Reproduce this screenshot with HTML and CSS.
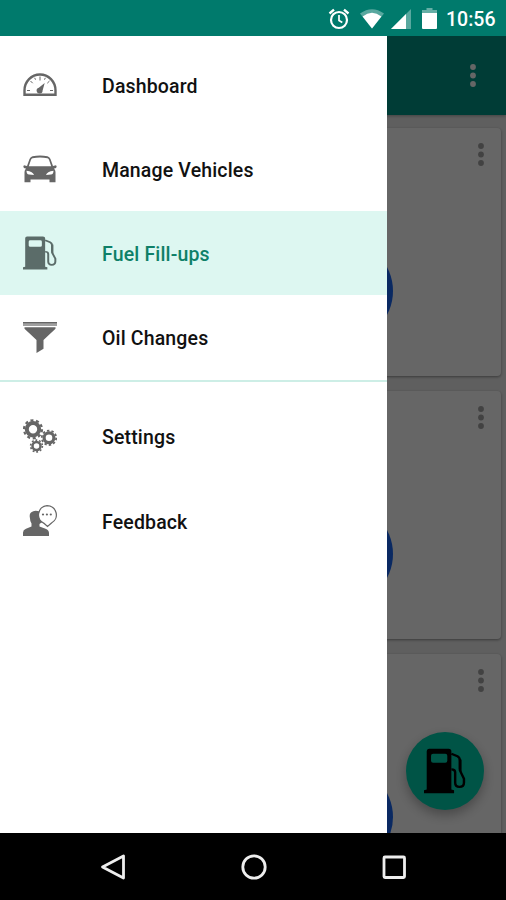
FILE: index.html
```html
<!DOCTYPE html>
<html lang="en">
<head>
    <meta charset="UTF-8">
    <meta name="viewport" content="width=device-width, initial-scale=1.0">
    <title>Fuel Fill-ups</title>
    <link rel="stylesheet" href="styles.css">
</head>
<body>

    <!-- Shared shapes -->
    <svg class="defs" width="0" height="0">
        <symbol id="pump" viewBox="0.8 0 31 36" preserveAspectRatio="none">
            <path fill-rule="evenodd" d="M4.500 .5H19Q21 .5 21 2.500V32.500L23 33V35.500H.8V33L2.800 32.500V2.500Q2.800 .5 4.500 .5ZM7.500 4.500Q6 4.500 6 6V10Q6 11.500 7.500 11.500H16.500Q18 11.500 18 10V6Q18 4.500 16.500 4.500Z"/>
            <path d="M21 4.500L25.500 6.500Q27.300 7.500 27.300 10V17.500L30.300 24V27Q30.300 30.500 27 30.500Q23.800 30.500 23.800 27V19Q23.800 16.700 21 16.700" fill="none" stroke="currentColor" stroke-width="1.800"/>
            <path d="M26.500 9V16L28.500 19V9Z"/>
        </symbol>
        <symbol id="dots" viewBox="0 0 6 23">
            <circle cx="3" cy="3" r="2.900"/>
            <circle cx="3" cy="11.500" r="2.900"/>
            <circle cx="3" cy="20" r="2.900"/>
        </symbol>
    </svg>

    <div class="phone">
        <header class="status-bar">
            <svg class="status-alarm" width="22" height="22" viewBox="0 0 22 22" fill="none" stroke="#fff">
                <circle cx="11" cy="12" r="8" stroke-width="2.200"/>
                <path d="M11 7V12.500L14.300 14.500" stroke-width="1.700"/>
                <path d="M1.500 5.500L6 1.700M20.500 5.500L16 1.700" stroke-width="2.400"/>
            </svg>
            <svg class="status-wifi" width="24" height="20" viewBox="0 0 24 20" fill="#fff">
                <path d="M0 4.500Q12-4 24 4.500L12 19.500Z" opacity=".35"/>
                <path d="M2.600 7.400Q12 0 21.400 7.400L12 19.500Z"/>
            </svg>
            <svg class="status-signal" width="20" height="20" viewBox="0 0 20 20" fill="#fff">
                <path d="M0 20L20 0V20Z" opacity=".35"/>
                <path d="M0 20L15 5V20Z"/>
            </svg>
            <svg class="status-battery" width="15" height="21" viewBox="0 0 15 21" fill="#fff">
                <path d="M4.500 0H10.500V2H15V5H0V2H4.500Z" opacity=".4"/>
                <path d="M0 5H15V20Q15 21 14 21H1Q0 21 0 20Z"/>
            </svg>
            <span class="clock">10:56</span>
        </header>

        <main class="screen">
            <div class="app-bar">
                <svg class="dots"><use href="#dots"/></svg>
            </div>
            <div class="cards">
                <div class="card">
                    <div class="badge"></div>
                    <svg class="dots"><use href="#dots"/></svg>
                </div>
                <div class="card">
                    <div class="badge"></div>
                    <svg class="dots"><use href="#dots"/></svg>
                </div>
                <div class="card">
                    <div class="badge"></div>
                    <svg class="dots"><use href="#dots"/></svg>
                </div>
            </div>
            <div class="fab">
                <svg><use href="#pump"/></svg>
            </div>
            <div class="scrim"></div>

            <nav class="drawer">
                <a class="item">
                    <svg viewBox="0 0 34 34">
                        <path d="M1.500 26.800V22.500A15.500 16 0 0 1 32.500 22.500V26.800Z" fill="none" stroke="currentColor" stroke-width="2.400"/>
                        <path d="M17 8.500V12.500M7.500 13L9.700 15.200M26.500 13L24.300 15.200M4 22.500H7M30 22.500H27M11.700 9.800L12.500 11.700M22.300 9.800L21.500 11.700" stroke="currentColor" stroke-width="1"/>
                        <path d="M21.700 15L19.600 22.500A3 3 0 1 1 15.800 19.700Z"/>
                    </svg>
                    <span>Dashboard</span>
                </a>
                <a class="item">
                    <svg viewBox="0 0 34 34">
                        <path fill-rule="evenodd" d="M9.500 4.200Q17 2.700 24.500 4.200Q26.500 4.700 27.500 7L30 14L33 13.200Q34.500 15.200 32.500 16.200L31 16.500Q32.500 18 32.500 20V30.300H26.500V27.500H7.500V30.300H1.500V20Q1.500 18 3 16.500L1.500 16.200Q-.5 15.200 1 13.200L4 14L6.500 7Q7.500 4.700 9.500 4.200ZM9.500 6.200Q8.500 6.500 8 7.800L5.800 14.200H28.200L26 7.800Q25.500 6.500 24.500 6.200Q17 5 9.500 6.200ZM3.500 18.700Q3.500 22.300 6 22.500L11 23Q10 19.500 3.500 18.700ZM30.500 18.700Q30.500 22.300 28 22.500L23 23Q24 19.500 30.500 18.700Z"/>
                    </svg>
                    <span>Manage Vehicles</span>
                </a>
                <a class="item active">
                    <svg><use href="#pump"/></svg>
                    <span>Fuel Fill-ups</span>
                </a>
                <a class="item">
                    <svg viewBox="0 0 34 34">
                        <rect x="0" y="2" width="34" height="4" opacity=".62"/>
                        <path d="M0 2H34V3.300H0ZM1.500 7.200H32.500V8.700L20.500 20V28.800L13.500 33V20L1.500 8.700Z"/>
                    </svg>
                    <span>Oil Changes</span>
                </a>
                <div class="divider"></div>
                <a class="item">
                    <svg viewBox="0 0 34 34" fill="none" stroke="currentColor">
                        <g stroke-width="4">
                            <circle cx="10" cy="10.300" r="6.200"/>
                            <circle cx="10" cy="10.300" r="9" stroke-width="2.200" stroke-dasharray="3 2.655"/>
                        </g>
                        <g stroke-width="3.200">
                            <circle cx="26" cy="18.800" r="4.900"/>
                            <circle cx="26" cy="18.800" r="7.200" stroke-width="1.800" stroke-dasharray="2.400 2.124"/>
                        </g>
                        <g stroke-width="2.500">
                            <circle cx="13.500" cy="27" r="4"/>
                            <circle cx="13.500" cy="27" r="5.900" stroke-width="1.600" stroke-dasharray="1.900 1.807"/>
                        </g>
                    </svg>
                    <span>Settings</span>
                </a>
                <a class="item">
                    <svg viewBox="0 0 34 34">
                        <path d="M0 32V28.500Q0 26 3 24.700L8.500 22.500V19.500Q7 17.500 7 14.500Q6 10 8 8.500Q12 5.500 17 8L18.500 16Q18 18.500 16.500 19.500V22.500L22.500 24.700Q26 26 26 29V32Z"/>
                        <path d="M24 1.600A9.500 9.300 0 0 1 28.500 19L24.500 22.500L21 19.300A9.500 9.300 0 0 1 24 1.600Z" fill="#fff" stroke="currentColor" stroke-width="1.300"/>
                        <path d="M16 7Q15 15 19 18.500L16 20L12 12Z"/>
                        <circle cx="20" cy="10.500" r="1.100"/>
                        <circle cx="23.900" cy="10.500" r="1.100"/>
                        <circle cx="27.800" cy="10.500" r="1.100"/>
                    </svg>
                    <span>Feedback</span>
                </a>
            </nav>
        </main>

        <footer class="nav-bar">
            <svg viewBox="0 0 28 28"><path d="M24.500 3V25L3.500 14Z"/></svg>
            <svg viewBox="0 0 28 28"><circle cx="14" cy="14" r="11.200"/></svg>
            <svg viewBox="0 0 28 28"><rect x="4" y="4" width="20.500" height="20.500" rx="1"/></svg>
        </footer>
    </div>

</body>
</html>
```
FILE: styles.css
```css
body {
    margin: 0;
    font-family: Roboto, sans-serif;
    background: #000;
}

svg {
    display: block;
    flex: none;
}

.defs {
    position: absolute;
}

.phone {
    display: flex;
    flex-direction: column;
    width: 506px;
    height: 900px;
    overflow: hidden;
}

/* Status bar */
.status-bar {
    display: flex;
    align-items: center;
    justify-content: flex-end;
    height: 36px;
    padding: 1px 11px 0 0;
    box-sizing: border-box;
    background: #007a6c;
    color: #fff;
}

.status-wifi {
    margin-left: 10px;
}

.status-signal {
    margin-left: 7px;
}

.status-battery {
    margin-left: 11px;
}

.clock {
    width: 49px;
    margin-left: 9px;
    padding-top: 2px;
    font-size: 19.500px;
    font-weight: 500;
    line-height: 34px;
    white-space: nowrap;
}

/* Page behind the drawer */
.screen {
    position: relative;
    height: 797px;
    overflow: hidden;
    background: #eee;
}

.app-bar {
    display: flex;
    align-items: center;
    justify-content: flex-end;
    height: 79px;
    padding-right: 30px;
    box-sizing: border-box;
    background: #009688;
    box-shadow: 0 1px 3px rgba(0, 0, 0, 0.3);
}

.dots {
    width: 6px;
    height: 23px;
    fill: #fff;
}

.cards {
    display: flex;
    flex-direction: column;
    gap: 15px;
    padding: 13px 5px;
}

.card {
    display: flex;
    align-items: flex-start;
    justify-content: space-between;
    height: 248px;
    padding: 15px 17px 0 286px;
    box-sizing: border-box;
    border-radius: 4px;
    background: #fff;
    box-shadow: 0 1px 3px rgba(0, 0, 0, 0.4);
}

.card .dots {
    fill: #a5a5a5;
}

.badge {
    width: 102px;
    height: 102px;
    margin-top: 97px;
    border-radius: 50%;
    background: #1967f5;
}

.fab {
    position: absolute;
    right: 22px;
    bottom: 23px;
    display: flex;
    align-items: center;
    justify-content: center;
    width: 78px;
    height: 78px;
    border-radius: 50%;
    background: #00d2b0;
    box-shadow: 0 5px 12px rgba(0, 0, 0, 0.3);
}

.fab svg {
    width: 42px;
    height: 46px;
    color: #000;
}

.scrim {
    position: absolute;
    inset: 0;
    background: rgba(0, 0, 0, 0.6);
}

/* Drawer */
.drawer {
    position: absolute;
    top: 0;
    bottom: 0;
    left: 0;
    width: 387px;
    padding-top: 6.400px;
    box-sizing: border-box;
    background: #fff;
}

.item {
    display: flex;
    align-items: center;
    gap: 45px;
    height: 84.300px;
    padding-left: 23px;
    box-sizing: border-box;
    color: #111;
    font-size: 19.500px;
    font-weight: 500;
    letter-spacing: 0.150px;
}

.item span {
    padding-top: 3px;
}

.item svg {
    width: 34px;
    height: 34px;
    color: #666;
}

.item svg:not([fill]) {
    fill: currentColor;
}

.item.active {
    background: #ddf7f1;
    color: #0e8068;
}

.item.active svg {
    color: #5b6c69;
}

.divider {
    height: 2px;
    margin-bottom: 12.600px;
    background: #cdeee6;
}

/* System navigation */
.nav-bar {
    display: flex;
    align-items: center;
    justify-content: space-between;
    height: 67px;
    padding: 0 98px 0 99px;
    box-sizing: border-box;
    background: #000;
}

.nav-bar svg {
    width: 28px;
    height: 28px;
    fill: none;
    stroke: #eee;
    stroke-width: 2.800;
    stroke-linejoin: round;
}
```
